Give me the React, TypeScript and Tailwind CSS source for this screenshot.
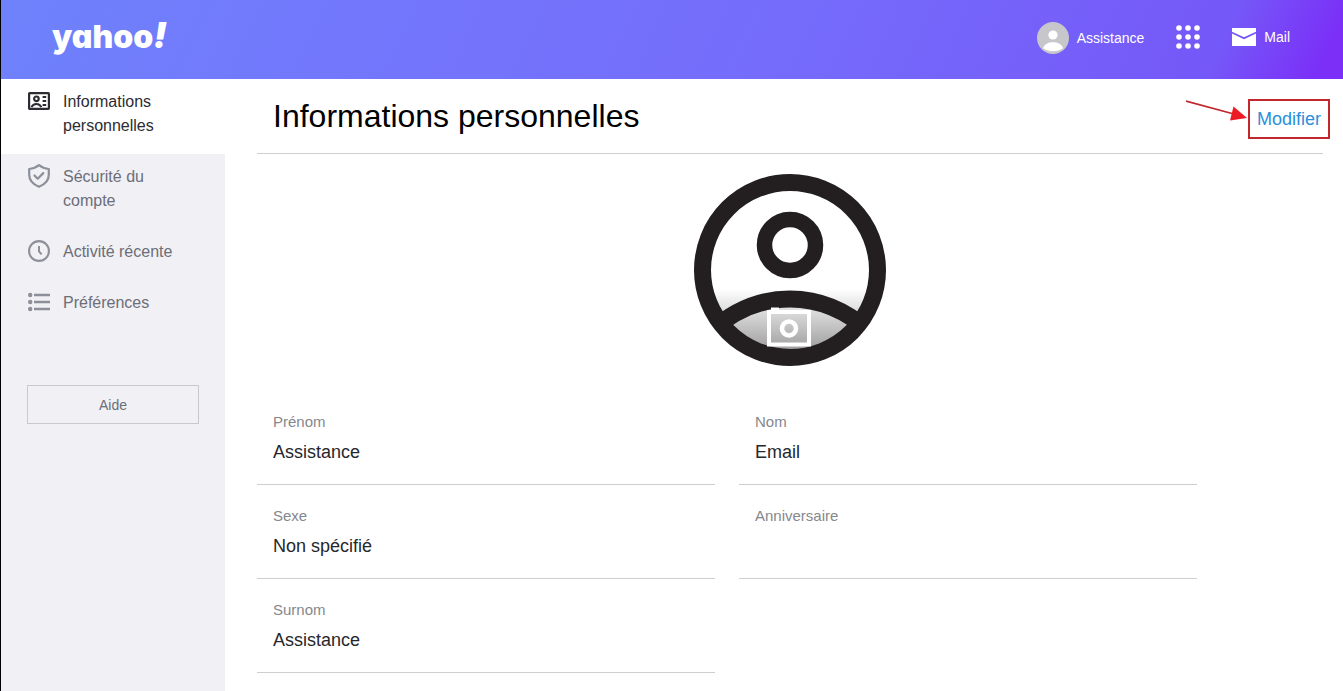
import type { ReactNode } from "react";

type IconProps = { className?: string };

function ContactCardIcon({ className }: IconProps) {
  return (
    <svg viewBox="0 0 22 18" className={className} fill="none" stroke="currentColor" strokeWidth="2.200" aria-hidden="true">
      <rect x="1.100" y="1.100" width="19.800" height="15.800" rx="0.6" />
      <circle cx="8.4" cy="6.800" r="2.300" strokeWidth="2.200" />
      <path d="M3.4 15.200c1.100-2.400 2.800-3.200 5-3.200s3.900.8 5 3.200" strokeWidth="2" />
      <path d="M14.600 5h3.600M14.600 9h3.600M14.600 13h3.600" strokeWidth="1.8" />
    </svg>
  );
}

function ShieldIcon({ className }: IconProps) {
  return (
    <svg viewBox="0 0 22 24" className={className} fill="none" stroke="currentColor" strokeWidth="2.200" strokeLinejoin="round" strokeLinecap="round" aria-hidden="true">
      <path d="M11 1.200C8.600 3.200 5.400 4.600 1.200 5v5.800c0 5.400 3.900 9.600 9.800 12 5.900-2.400 9.800-6.600 9.800-12V5C16.600 4.600 13.400 3.200 11 1.200z" />
      <path d="M6.500 11.500l3.200 3.200 5.600-5.600" />
    </svg>
  );
}

function ClockIcon({ className }: IconProps) {
  return (
    <svg viewBox="0 0 22 22" className={className} fill="none" stroke="currentColor" strokeWidth="2.100" aria-hidden="true">
      <circle cx="11" cy="11" r="9.900" />
      <path d="M11 6v5.300l2.600 3" strokeWidth="2" />
    </svg>
  );
}

function ListIcon({ className }: IconProps) {
  return (
    <svg viewBox="0 0 22 20" className={className} fill="currentColor" aria-hidden="true">
      <circle cx="2.200" cy="3" r="2.200" />
      <circle cx="2.200" cy="10" r="2.200" />
      <circle cx="2.200" cy="17" r="2.200" />
      <path d="M6 1.800h16v2.400H6zM6 8.800h16v2.400H6zM6 15.800h16v2.400H6z" />
    </svg>
  );
}

function HeaderAvatar() {
  return (
    <svg viewBox="0 0 32 32" className="size-8" aria-hidden="true">
      <circle cx="16" cy="16" r="16" fill="#c7c7cb" />
      <circle cx="16" cy="13" r="4.600" fill="#fff" />
      <path d="M6 26.200c1.500-4.200 5.200-6 10-6s8.500 1.800 10 6c-2.800 2.100-6 3-10 3s-7.200-.9-10-3z" fill="#fff" />
    </svg>
  );
}

function AppsIcon() {
  return (
    <svg viewBox="0 0 24 24" className="size-6" fill="#fff" aria-hidden="true">
      {[3, 12, 21].map((y) =>
        [3, 12, 21].map((x) => <circle key={`${x}-${y}`} cx={x} cy={y} r="2.800" />)
      )}
    </svg>
  );
}

function MailIcon() {
  return (
    <svg viewBox="0 0 24 18" className="h-[18px] w-6" fill="#fff" aria-hidden="true">
      <path d="M0 0h24v3.800L12 9.200 0 3.800z" />
      <path d="M0 5.600l12 5.600 12-5.600V18H0z" />
    </svg>
  );
}

function ProfilePicture() {
  return (
    <svg viewBox="0 0 192 192" className="size-48" role="img" aria-label="Photo de profil">
      <defs>
        <linearGradient id="shade" x1="0" y1="115" x2="0" y2="192" gradientUnits="userSpaceOnUse">
          <stop offset="0" stopColor="#000" stopOpacity="0" />
          <stop offset="1" stopColor="#000" stopOpacity="0.480" />
        </linearGradient>
        <clipPath id="disc">
          <circle cx="96" cy="96" r="88" />
        </clipPath>
      </defs>
      <rect y="115" width="192" height="77" fill="url(#shade)" clipPath="url(#disc)" />
      <g fill="none" stroke="#231f20">
        <g clipPath="url(#disc)">
          <path d="M16 158Q52 125 96 125T176 158" strokeWidth="17" />
        </g>
        <circle cx="96" cy="96" r="87.500" strokeWidth="17" />
        <circle cx="96" cy="71" r="25.500" strokeWidth="15.500" />
      </g>
      <g fill="none" stroke="#fff">
        <rect x="75" y="138" width="40" height="32.500" strokeWidth="4" />
        <path d="M77 135h8" strokeWidth="3" />
        <circle cx="95" cy="154.500" r="7" strokeWidth="4.600" />
      </g>
    </svg>
  );
}

function NavItem({ icon, children, active = false }: { icon: ReactNode; children: ReactNode; active?: boolean }) {
  return (
    <a
      href="#"
      aria-current={active ? "page" : undefined}
      className={
        active
          ? "flex items-start gap-3 bg-white px-[26px] pt-[11px] pb-4 text-[#2c2c32]"
          : "flex items-start gap-3 px-[26px] pt-[11px] pb-4 text-[#6c6e78]"
      }
    >
      <span className={active ? "flex h-[22px] w-6 shrink-0 items-center justify-center" : "flex h-[22px] w-6 shrink-0 items-center justify-center text-[#8d8f99]"}>
        {icon}
      </span>
      <span className="leading-6">{children}</span>
    </a>
  );
}

function Field({ label, value }: { label: string; value?: string }) {
  return (
    <div className="h-[94px] border-b border-[#cfcfd3] px-4 pt-[21px]">
      <dt className="text-[15px] leading-5 text-[#86878c]">{label}</dt>
      <dd className="mt-2 text-lg leading-6 text-[#26272b]">{value}</dd>
    </div>
  );
}

export default function App() {
  return (
    <div className="flex min-h-screen flex-col border-l border-black bg-white font-['Liberation_Sans',Arial,sans-serif]">
      <header className="flex h-[79px] items-center justify-between bg-[linear-gradient(115deg,#6e82fb_0%,#727afc_20%,#756bfb_60%,#7558f8_90%,#7b2ff7_98%)] pr-[53px] pl-[51px] text-white">
        <a href="#" className="flex items-baseline pb-2 font-['Inter',sans-serif] text-[32px] leading-10 font-black [font-feature-settings:'cv11']">
          yahoo<span className="text-4xl leading-10 italic">!</span>
        </a>
        <nav className="flex items-start gap-8 pb-1 text-sm">
          <a href="#" className="flex h-8 items-center gap-2">
            <HeaderAvatar />
            Assistance
          </a>
          <button type="button" aria-label="Applications" className="flex h-[30px] items-center">
            <AppsIcon />
          </button>
          <a href="#" className="flex h-[30px] items-center gap-2">
            <MailIcon />
            Mail
          </a>
        </nav>
      </header>

      <div className="flex flex-1">
        <aside className="w-56 shrink-0 bg-[#f0f0f5]">
          <nav>
            <NavItem active icon={<ContactCardIcon className="h-[18px] w-[22px]" />}>
              Informations personnelles
            </NavItem>
            <NavItem icon={<ShieldIcon className="h-6 w-[22px]" />}>Sécurité du compte</NavItem>
            <NavItem icon={<ClockIcon className="size-[22px]" />}>Activité récente</NavItem>
            <NavItem icon={<ListIcon className="h-5 w-[22px]" />}>Préférences</NavItem>
          </nav>
          <div className="px-[26px] pt-[54px]">
            <button type="button" className="h-[39px] w-full border border-[#c8c8ce] text-sm text-[#6c6e78]">
              Aide
            </button>
          </div>
        </aside>

        <main className="min-w-0 flex-1 pr-5 pl-8">
          <div className="flex h-[75px] items-start justify-between border-b border-[#cfcfd3] pt-5 pl-4">
            <h1 className="text-[32px] leading-[34px] text-black">Informations personnelles</h1>
            <div className="-mr-[7px] flex">
              <svg viewBox="0 0 62 24" className="h-6 w-[62px]" aria-hidden="true">
                <path d="M0 2l46 12.500" stroke="#c1272d" strokeWidth="1.800" />
                <path d="M61 19l-17 2.500L47.500 7.500z" fill="#ed1c24" />
              </svg>
              <a href="#" className="flex h-10 items-center border-2 border-[#c1272d] px-[7px] text-lg text-[#2a8fdc]">
                Modifier
              </a>
            </div>
          </div>

          <div className="flex justify-center pt-5">
            <ProfilePicture />
          </div>

          <dl className="mt-[25px] grid max-w-[940px] grid-cols-2 gap-x-6">
            <Field label="Prénom" value="Assistance" />
            <Field label="Nom" value="Email" />
            <Field label="Sexe" value="Non spécifié" />
            <Field label="Anniversaire" />
            <Field label="Surnom" value="Assistance" />
          </dl>
        </main>
      </div>
    </div>
  );
}
